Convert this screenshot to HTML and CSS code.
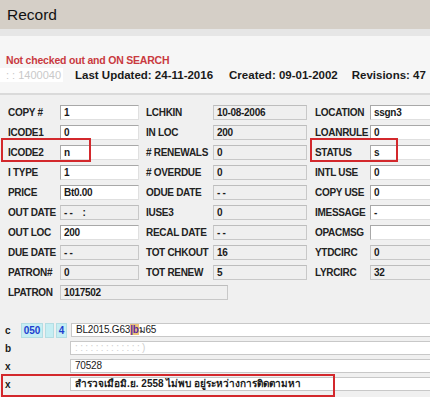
FILE: index.html
```html
<!DOCTYPE html>
<html lang="en">
<head>
    <meta charset="UTF-8">
    <title>Record</title>
    <link rel="stylesheet" href="styles.css">
</head>
<body>
    <div class="titlebar">Record</div>
    <div class="band"></div>

    <div class="status">
        <p class="alert">Not checked out and ON SEARCH</p>
        <div class="meta">
            <span class="barcode">: : 1400040</span>
            <span class="upd">Last Updated: 24-11-2016</span>
            <span class="crt">Created: 09-01-2002</span>
            <span class="rev">Revisions: 47</span>
        </div>
    </div>

    <div class="fields">
        <div class="lbl">COPY #</div><div class="val">1</div>
        <div class="lbl mid">LCHKIN</div><div class="val ro">10-08-2006</div>
        <div class="lbl right">LOCATION</div><div class="val">ssgn3</div>

        <div class="lbl">ICODE1</div><div class="val">0</div>
        <div class="lbl mid">IN LOC</div><div class="val ro">200</div>
        <div class="lbl right">LOANRULE</div><div class="val">0</div>

        <div class="lbl">ICODE2</div><div class="val">n</div>
        <div class="lbl mid"># RENEWALS</div><div class="val ro">0</div>
        <div class="lbl right">STATUS</div><div class="val">s</div>

        <div class="lbl">I TYPE</div><div class="val">1</div>
        <div class="lbl mid"># OVERDUE</div><div class="val ro">0</div>
        <div class="lbl right">INTL USE</div><div class="val">0</div>

        <div class="lbl">PRICE</div><div class="val">Bt0.00</div>
        <div class="lbl mid">ODUE DATE</div><div class="val ro">- -</div>
        <div class="lbl right">COPY USE</div><div class="val">0</div>

        <div class="lbl">OUT DATE</div><div class="val ro">- - &nbsp;&nbsp; :</div>
        <div class="lbl mid">IUSE3</div><div class="val ro">0</div>
        <div class="lbl right">IMESSAGE</div><div class="val">-</div>

        <div class="lbl">OUT LOC</div><div class="val">200</div>
        <div class="lbl mid">RECAL DATE</div><div class="val ro">- -</div>
        <div class="lbl right">OPACMSG</div><div class="val"></div>

        <div class="lbl">DUE DATE</div><div class="val ro">- -</div>
        <div class="lbl mid">TOT CHKOUT</div><div class="val ro">16</div>
        <div class="lbl right">YTDCIRC</div><div class="val ro">0</div>

        <div class="lbl">PATRON#</div><div class="val ro">0</div>
        <div class="lbl mid">TOT RENEW</div><div class="val ro">5</div>
        <div class="lbl right">LYRCIRC</div><div class="val ro">32</div>

        <div class="lbl">LPATRON</div><div class="val ro wide">1017502</div>

        <span class="mark mark-icode"></span>
        <span class="mark mark-status"></span>
    </div>

    <div class="marc">
        <div class="mrow">
            <span class="tag short">c</span>
            <span class="ind i050">050</span>
            <span class="ind iblank"></span>
            <span class="ind i4">4</span>
            <span class="mfield">BL2015.G63<span class="sub">|b</span>ม65</span>
        </div>
        <div class="mrow">
            <span class="tag">b</span>
            <span class="mfield"><span class="masked">: : : : : : : : : : : : : )</span></span>
        </div>
        <div class="mrow">
            <span class="tag">x</span>
            <span class="mfield">70528</span>
        </div>
        <div class="mrow">
            <span class="tag">x</span>
            <span class="mfield thai">สำรวจเมื่อมิ.ย. 2558 ไม่พบ อยู่ระหว่างการติดตามหา</span>
        </div>
        <span class="mark mark-note"></span>
    </div>
</body>
</html>
```

FILE: styles.css
```css
body{
    margin: 0;
    width: 430px;
    height: 397px;
    overflow: hidden;
    background: #f0f0f0;
    font-family: "Liberation Sans", Arial, sans-serif;
    color: #1a1a1a;
}

/* title bar */
.titlebar{
    height: 29px;
    line-height: 29px;
    padding-left: 7px;
    background: #d5cfc7;
    font-size: 15.5px;
    color: #111;
}
.band{
    height: 7px;
    background: #e6e6e6;
}

/* status block */
.status{
    height: 40px;
    padding: 17px 0 0 6px;
    background: #f6f6f6;
    border-bottom: 2px solid #dadada;
}
.alert{
    margin: 0;
    color: #c93a3f;
    font-weight: bold;
    font-size: 10.5px;
    line-height: 14px;
    letter-spacing: -0.2px;
}
.meta{
    display: flex;
    margin-top: 1px;
    font-weight: bold;
    font-size: 11.5px;
    line-height: 14px;
    white-space: nowrap;
}
.barcode{
    width: 57px;
    margin-left: -6px;
    padding-left: 6px;
    background: #fff;
    color: #c9c9c9;
    font-weight: normal;
    font-size: 11px;
}
.upd{ margin-left: 12px; }
.crt{ margin-left: 16px; }
.rev{ margin-left: 14px; }

/* item fields */
.fields{
    position: relative;
    display: grid;
    grid-template-columns: 52px 79px 74px 94px 63px 70px;
    grid-auto-rows: 20px;
    align-items: center;
    padding: 7px 0 0 8px;
}
.lbl{
    font-weight: bold;
    font-size: 10px;
    letter-spacing: -0.3px;
    white-space: nowrap;
    color: #222;
}
.lbl.mid{ padding-left: 7px; }
.lbl.right{ padding-left: 8px; }
.val{
    height: 15px;
    box-sizing: border-box;
    padding-left: 3px;
    border: 1px solid;
    border-color: #a8a8a8 #e0e0e0 #e0e0e0 #a8a8a8;
    background: #fff;
    font-weight: bold;
    font-size: 10px;
    line-height: 13px;
    letter-spacing: -0.3px;
    white-space: nowrap;
    overflow: hidden;
}
.val.ro{
    background: #efefef;
    border-color: #bdbdbd #c8c8c8 #c8c8c8 #c8c8c8;
}
.val.wide{
    grid-column: 2 / span 3;
    width: 168px;
}

/* red annotation boxes drawn over the form */
.mark{
    position: absolute;
    border: 2px solid #d3282c;
    box-sizing: border-box;
    pointer-events: none;
}
.mark-icode{
    left: 1px;
    top: 43px;
    width: 90px;
    height: 24px;
}
.mark-status{
    left: 310px;
    top: 43px;
    width: 88px;
    height: 24px;
}

/* marc lines */
.marc{
    position: relative;
    padding-top: 19px;
}
.mrow{
    display: flex;
    align-items: center;
    height: 18px;
}
.tag{
    width: 65px;
    padding-left: 5px;
    font-weight: bold;
    font-size: 10px;
}
.tag.short{ width: 16px; }
.ind{
    height: 15px;
    box-sizing: border-box;
    background: #c6eef3;
    border: 1px solid #b4dde3;
    color: #1d3fcf;
    font-weight: bold;
    font-size: 10px;
    line-height: 13px;
    text-align: center;
}
.i050{ width: 22px; margin-right: 2px; }
.iblank{ width: 9px; margin-right: 2px; }
.i4{ width: 11px; margin-right: 4px; }
.mfield{
    flex: 1;
    height: 14px;
    box-sizing: border-box;
    padding-left: 4px;
    background: #fff;
    border: 1px solid #c8c8c8;
    border-right: none;
    font-size: 10px;
    line-height: 12px;
    letter-spacing: -0.2px;
    white-space: nowrap;
    overflow: hidden;
}
.sub{
    background: #eec27c;
    color: #5a2aa0;
    font-weight: bold;
}
.masked{
    color: #cfcfcf;
}
.thai{
    font-weight: bold;
    letter-spacing: 0;
}
.mark-note{
    left: 1px;
    top: 72px;
    width: 334px;
    height: 23px;
}
```
